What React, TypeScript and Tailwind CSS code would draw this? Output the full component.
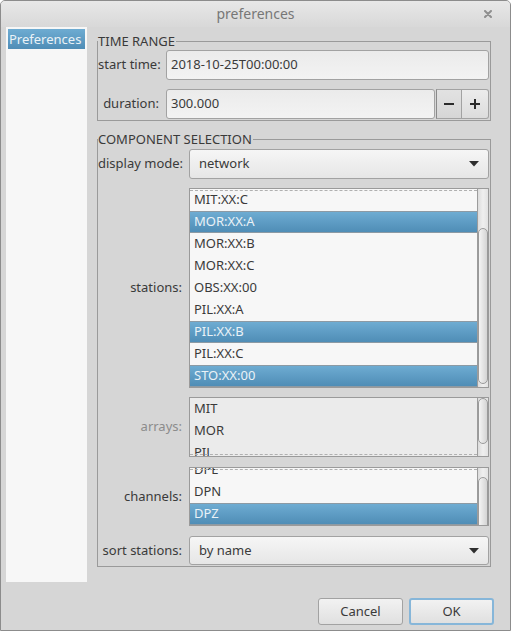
import React from "react";

type Row = { t: string; sel?: boolean };

function Scrollbar({ top, h }: { top: number; h: number }) {
  return (
    <div className="w-[11px] shrink-0 border-l border-[#9c9c9c] bg-gradient-to-r from-[#dcdcdc] via-[#efefef] to-[#e2e2e2] overflow-hidden flex flex-col">
      <div className="shrink-0" style={{ height: top }} />
      <div
        className="shrink-0 w-[10px] rounded-full border border-[#9a9a9a] bg-gradient-to-r from-[#f4f4f4] to-[#d4d4d4]"
        style={{ height: h }}
      />
    </div>
  );
}

function ListBox({
  rows,
  offset,
  thumbTop,
  thumbH,
  bg,
  dashTop,
  dashBottom,
  h,
}: {
  rows: Row[];
  offset: number;
  thumbTop: number;
  thumbH: number;
  bg: string;
  dashTop?: boolean;
  dashBottom?: boolean;
  h: number;
}) {
  return (
    <div className="w-[300px] flex border border-[#9a9a9a] overflow-hidden" style={{ height: h }}>
      <div className={`relative flex-1 overflow-hidden ${bg}`}>
        <div className="flex flex-col" style={{ marginTop: offset }}>
          {rows.map((r) => (
            <div
              key={r.t}
              className={
                r.sel
                  ? "h-[22px] shrink-0 flex items-center pl-[4px] border-y border-[#8c9aa4] bg-gradient-to-b from-[#6eacd2] to-[#4f8db6] text-[#eaf2f7]"
                  : "h-[22px] shrink-0 flex items-center pl-[4px]"
              }
            >
              {r.t}
            </div>
          ))}
        </div>
        {dashTop && <div className="absolute left-0 right-0 top-[1px] border-t border-dashed border-[#b0b0b0]" />}
        {dashBottom && <div className="absolute left-0 right-0 bottom-[1px] border-t border-dashed border-[#b0b0b0]" />}
      </div>
      <Scrollbar top={thumbTop} h={thumbH} />
    </div>
  );
}

function Combo({ text, h }: { text: string; h: number }) {
  return (
    <div
      className="w-[300px] flex items-center justify-between rounded-[3px] border border-[#a2a2a2] bg-gradient-to-b from-[#f6f6f6] to-[#e6e6e6] pl-[9px] pr-[9px]"
      style={{ height: h }}
    >
      <span>{text}</span>
      <svg width="10" height="6" viewBox="0 0 10 6">
        <polygon points="0,0 10,0 5,5.5" fill="#2e2e2e" />
      </svg>
    </div>
  );
}

export default function App() {
  const stations: Row[] = [
    { t: "MIT:XX:C" },
    { t: "MOR:XX:A", sel: true },
    { t: "MOR:XX:B" },
    { t: "MOR:XX:C" },
    { t: "OBS:XX:00" },
    { t: "PIL:XX:A" },
    { t: "PIL:XX:B", sel: true },
    { t: "PIL:XX:C" },
    { t: "STO:XX:00", sel: true },
  ];
  const arrays: Row[] = [{ t: "MIT" }, { t: "MOR" }, { t: "PIL" }];
  const channels: Row[] = [{ t: "DPE" }, { t: "DPN" }, { t: "DPZ", sel: true }];

  return (
    <div className="w-[512px] h-[631px] bg-white font-['Noto_Sans',sans-serif] text-[13px] text-[#3a3a3a] whitespace-nowrap">
      <div className="w-[511px] h-[631px] flex flex-col bg-[#d6d6d6] border border-[#8c8c8c] rounded-t-[5px] overflow-hidden">
        {/* title bar */}
        <div className="relative h-[26px] shrink-0 flex items-center justify-center bg-gradient-to-b from-[#e8e8e8] to-[#d8d8d8] text-[#777777] text-[14px]">
          <span className="-mt-[1px]">preferences</span>
          <svg className="absolute right-[18px] top-[9px]" width="8" height="8" viewBox="0 0 8 8">
            <path d="M1 1 L7 7 M7 1 L1 7" stroke="#8f8f8f" strokeWidth="2" strokeLinecap="round" />
          </svg>
        </div>

        {/* body */}
        <div className="flex shrink-0">
          <div className="ml-[5px] w-[81px] h-[555px] bg-[#f7f7f7] pt-[2px] px-[2px]">
            <div className="h-[20px] flex items-center pl-[1px] bg-gradient-to-b from-[#6eacd2] to-[#4f8db6] text-[#eaf2f7] leading-none">
              Preferences
            </div>
          </div>

          <div className="ml-[10px] w-[394px] pt-[7px] flex flex-col">
            <fieldset className="border border-[#9a9a9a] pb-[1px]">
              <legend className="leading-[14px] pr-[1px]">TIME RANGE</legend>
              <div className="pt-[2px] flex flex-col">
                <div className="h-[30px] flex items-center">
                  <div className="w-[61px] shrink-0 text-right">start time:</div>
                  <div className="ml-[7px] w-[323px] h-[30px] flex items-center rounded-[3px] border border-[#a2a2a2] bg-gradient-to-b from-[#ebebeb] to-[#f3f3f3] pl-[4px]">
                    2018-10-25T00:00:00
                  </div>
                </div>
                <div className="mt-[9px] h-[30px] flex items-center">
                  <div className="w-[61px] shrink-0 text-right">duration:</div>
                  <div className="ml-[7px] w-[269px] h-[30px] flex items-center rounded-[3px] border border-[#a2a2a2] bg-gradient-to-b from-[#ebebeb] to-[#f3f3f3] pl-[4px]">
                    300.000
                  </div>
                  <div className="ml-[1px] w-[26px] h-[30px] flex items-center justify-center border border-[#a2a2a2] border-l-[#8a8a8a] bg-gradient-to-b from-[#e2e2e2] to-[#d6d6d6]">
                    <svg width="10" height="10" viewBox="0 0 10 10">
                      <path d="M0 5 H10" stroke="#2b2b2b" strokeWidth="2" />
                    </svg>
                  </div>
                  <div className="w-[27px] h-[30px] flex items-center justify-center rounded-r-[3px] border border-l-0 border-[#a2a2a2] bg-gradient-to-b from-[#ececec] to-[#dcdcdc]">
                    <svg width="10" height="10" viewBox="0 0 10 10">
                      <path d="M0 5 H10 M5 0 V10" stroke="#2b2b2b" strokeWidth="2" />
                    </svg>
                  </div>
                </div>
              </div>
            </fieldset>

            <fieldset className="mt-[11px] border border-[#9a9a9a] pb-[1px]">
              <legend className="leading-[14px] pr-[1px]">COMPONENT SELECTION</legend>
              <div className="pt-[3px] flex flex-col">
                <div className="flex items-center">
                  <div className="w-[86px] shrink-0 text-right pr-[2px]">display mode:</div>
                  <div className="ml-[5px]">
                    <Combo text="network" h={30} />
                  </div>
                </div>
                <div className="mt-[9px] flex items-center">
                  <div className="w-[86px] shrink-0 text-right pr-[2px]">stations:</div>
                  <div className="ml-[5px]">
                    <ListBox rows={stations} offset={0} thumbTop={39} thumbH={156} bg="bg-[#f7f7f7]" dashTop h={200} />
                  </div>
                </div>
                <div className="mt-[9px] flex items-center">
                  <div className="w-[86px] shrink-0 text-right pr-[2px] text-[#8c8c8c]">arrays:</div>
                  <div className="ml-[5px]">
                    <ListBox rows={arrays} offset={0} thumbTop={0} thumbH={46} bg="bg-[#ebebeb]" dashBottom h={60} />
                  </div>
                </div>
                <div className="mt-[10px] flex items-center">
                  <div className="w-[86px] shrink-0 text-right pr-[2px]">channels:</div>
                  <div className="ml-[5px]">
                    <ListBox rows={channels} offset={-9} thumbTop={9} thumbH={60} bg="bg-[#f7f7f7]" dashTop h={59} />
                  </div>
                </div>
                <div className="mt-[10px] flex items-center">
                  <div className="w-[86px] shrink-0 text-right pr-[2px]">sort stations:</div>
                  <div className="ml-[5px]">
                    <Combo text="by name" h={29} />
                  </div>
                </div>
              </div>
            </fieldset>
          </div>
        </div>

        {/* buttons */}
        <div className="mt-[16px] flex justify-end pr-[16px] gap-[6px]">
          <div className="w-[85px] h-[27px] flex items-center justify-center rounded-[3px] border border-[#a2a2a2] bg-gradient-to-b from-[#f2f2f2] to-[#e0e0e0]">
            Cancel
          </div>
          <div className="w-[85px] h-[27px] flex items-center justify-center rounded-[3px] border-2 border-[#86b6d9] bg-gradient-to-b from-[#f2f2f2] to-[#e0e0e0]">
            OK
          </div>
        </div>
      </div>
    </div>
  );
}
